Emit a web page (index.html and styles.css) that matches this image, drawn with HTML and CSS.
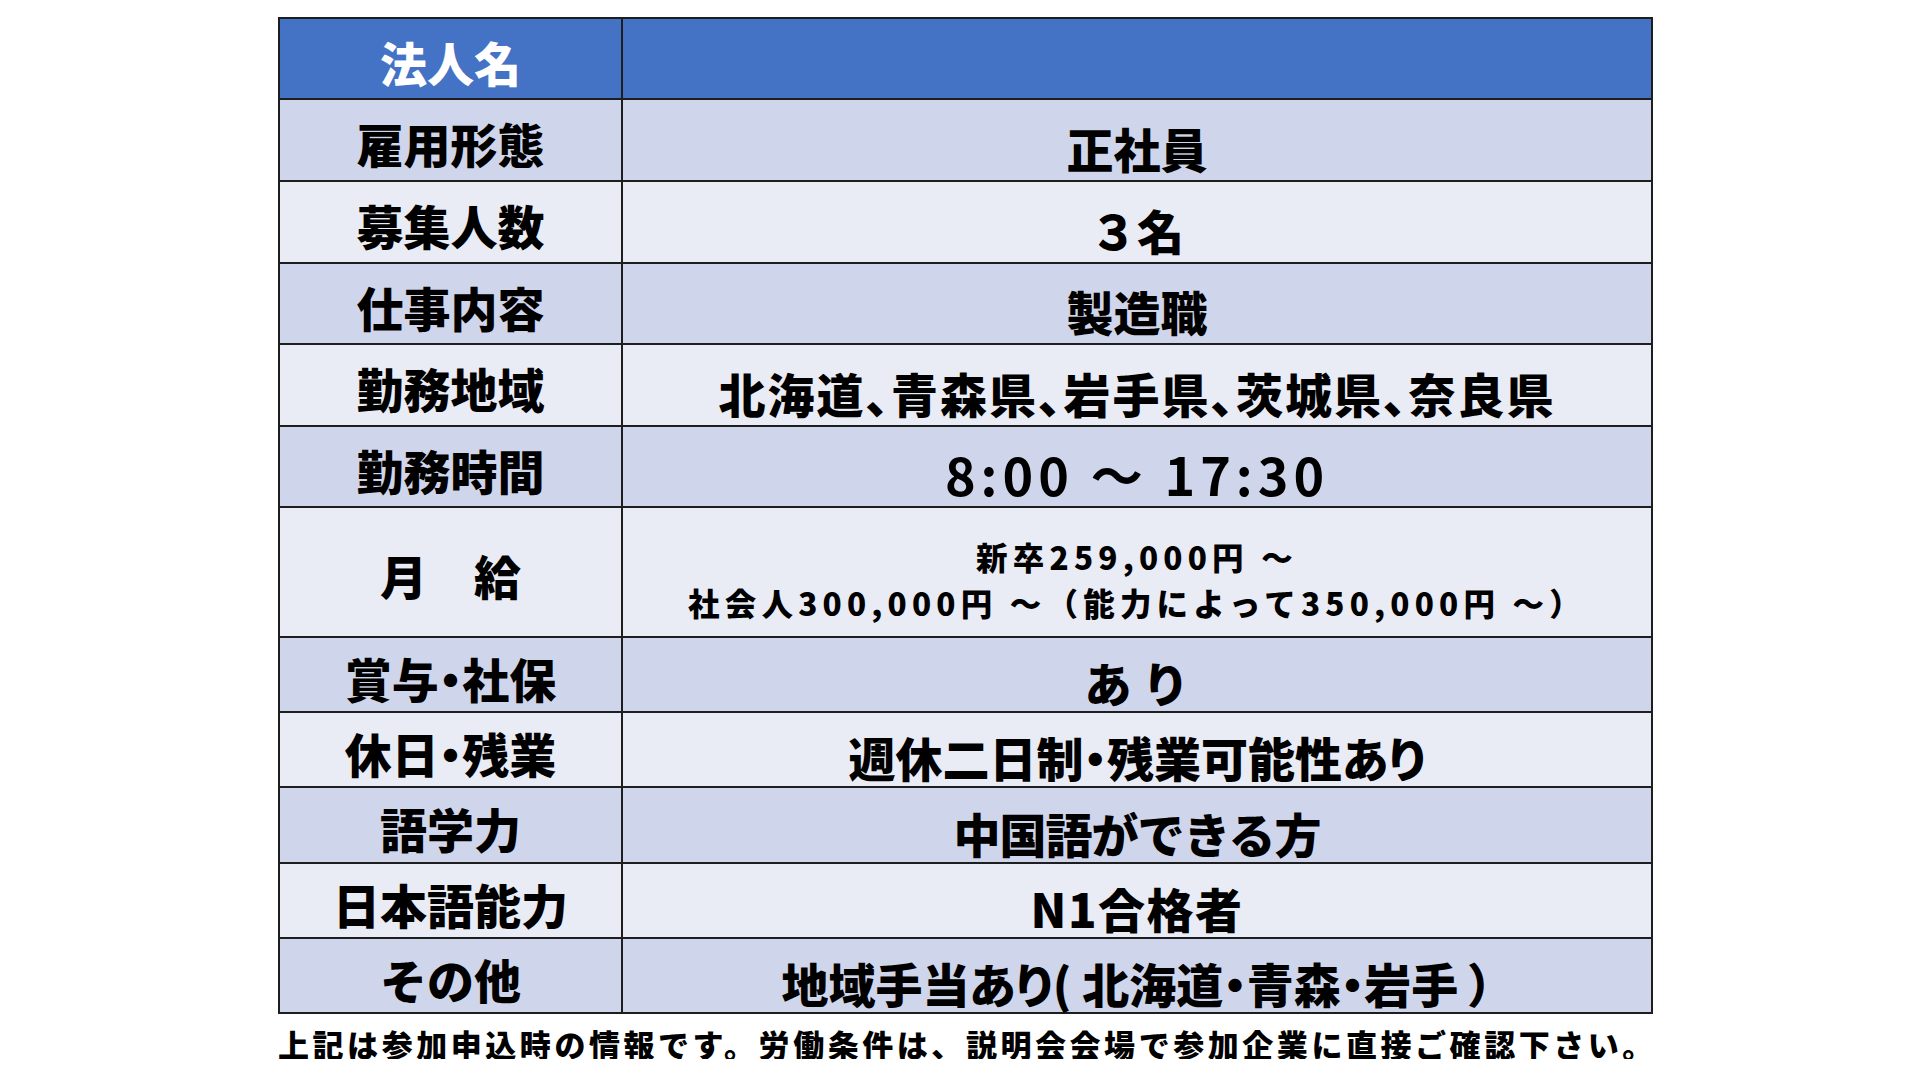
FILE: index.html
```html
<!DOCTYPE html>
<html lang="ja">
<head>
<meta charset="utf-8">
<title>募集要項</title>
<link rel="stylesheet" href="styles.css">
</head>
<body>
<div class="sheet">
  <div class="cell head label">法人名</div>
  <div class="cell head"></div>

  <div class="cell dark label">雇用形態</div>
  <div class="cell dark value">正社員</div>

  <div class="cell light label">募集人数</div>
  <div class="cell light value">３名</div>

  <div class="cell dark label">仕事内容</div>
  <div class="cell dark value">製造職</div>

  <div class="cell light label">勤務地域</div>
  <div class="cell light value palt wide">北海道、青森県、岩手県、茨城県、奈良県</div>

  <div class="cell dark label">勤務時間</div>
  <div class="cell dark value time">8:00 ～ 17:30</div>

  <div class="cell light label">月　給</div>
  <div class="cell light salary">
    <div class="line">新卒259,000円 ～</div>
    <div class="line">社会人300,000円 ～（能力によって350,000円 ～）</div>
  </div>

  <div class="cell dark label palt">賞与・社保</div>
  <div class="cell dark value">あ り</div>

  <div class="cell light label palt">休日・残業</div>
  <div class="cell light value palt">週休二日制・残業可能性あり</div>

  <div class="cell dark label">語学力</div>
  <div class="cell dark value tight">中国語ができる方</div>

  <div class="cell light label">日本語能力</div>
  <div class="cell light value loose">N1合格者</div>

  <div class="cell dark label">その他</div>
  <div class="cell dark value palt">地域手当あり( 北海道・青森・岩手 ）</div>
</div>
<p class="note">上記は参加申込時の情報です。労働条件は、説明会会場で参加企業に直接ご確認下さい。</p>
</body>
</html>
```

FILE: styles.css
```css
body {
  margin: 0;
  background: #ffffff;
  color: #000000;
  font-family: "Noto Sans CJK JP", "Noto Sans CJK SC", sans-serif;
  font-weight: 900;
}

.sheet {
  display: grid;
  grid-template-columns: 341px 1028px;
  grid-template-rows: 79px 80px 80px 79px 80px 79px 128px 73px 73px 74px 73px 73px;
  gap: 2px;
  padding: 2px;
  background: #1e1e1e;
  width: max-content;
  margin: 17px 0 0 278px;
}

.cell {
  display: flex;
  align-items: center;
  justify-content: center;
  line-height: 1;
  white-space: nowrap;
}

.label {
  font-size: 47px;
  padding-top: 5px;
}

.value {
  font-size: 47px;
  padding-top: 14px;
}

.head {
  background: #4472c4;
  color: #ffffff;
}

.dark {
  background: #cfd5ea;
}

.light {
  background: #e9ebf5;
}

.palt {
  font-feature-settings: "palt";
}

.wide {
  letter-spacing: 2px;
}

.tight {
  letter-spacing: -1px;
}

.loose {
  letter-spacing: 1.5px;
}

.time {
  font-size: 52px;
  font-weight: 700;
  letter-spacing: 5px;
}

.salary {
  flex-direction: column;
  font-size: 31.5px;
  letter-spacing: 5.2px;
  padding-top: 14px;
}

.line {
  display: block;
  height: 46px;
  line-height: 46px;
}

.note {
  margin: 14px 0 0 278px;
  font-size: 31px;
  letter-spacing: 3.55px;
  line-height: 1;
  white-space: nowrap;
}
```
